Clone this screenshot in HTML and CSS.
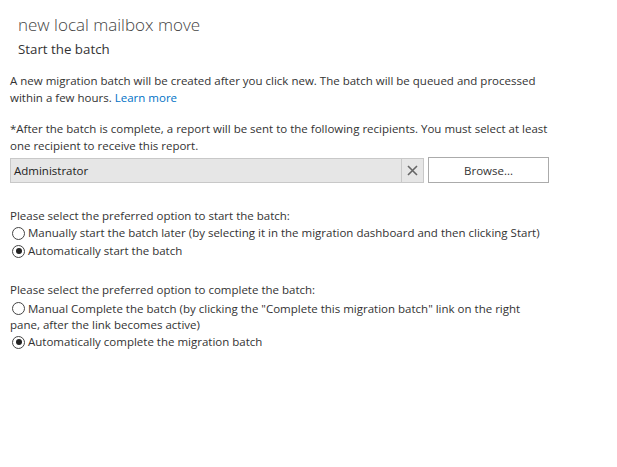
FILE: index.html
```html
<!DOCTYPE html>
<html>
<head>
<meta charset="utf-8">
<link rel="stylesheet" href="styles.css">
</head>
<body>
<div class="page">
  <div class="header">
    <h1 class="title">new local mailbox move</h1>
    <h2 class="subtitle">Start the batch</h2>
  </div>
  <p class="para intro">A new migration batch will be created after you click new. The batch will be queued and processed within a few hours. <a class="link" href="#">Learn more</a></p>
  <p class="para recip">*After the batch is complete, a report will be sent to the following recipients. You must select at least one recipient to receive this report.</p>
  <div class="picker">
    <div class="field">
      <span class="field-text">Administrator</span>
      <span class="clear"><svg width="11" height="11" viewBox="0 0 11 11"><path d="M1 1L10 10M10 1L1 10" stroke="#666" stroke-width="1.6"/></svg></span>
    </div>
    <button class="browse">Browse...</button>
  </div>
  <div class="group g1">
    <div class="label">Please select the preferred option to start the batch:</div>
    <div class="opt"><span class="radio"></span><span>Manually start the batch later (by selecting it in the migration dashboard and then clicking Start)</span></div>
    <div class="opt"><span class="radio on"></span><span>Automatically start the batch</span></div>
  </div>
  <div class="group g2">
    <div class="label">Please select the preferred option to complete the batch:</div>
    <div class="opt wrap"><span class="radio"></span>Manual Complete the batch (by clicking the "Complete this migration batch" link on the right pane, after the link becomes active)</div>
    <div class="opt"><span class="radio on"></span><span>Automatically complete the migration batch</span></div>
  </div>
</div>
</body>
</html>
```
FILE: styles.css
```css
html, body {
  margin: 0;
  padding: 0;
  background: #fff;
}
body {
  font-family: "Open Sans", "Noto Sans", sans-serif;
  color: #333;
  font-size: 11.5px;
}
.page {
  width: 560px;
  padding: 0 0 0 10px;
}
.header {
  padding-left: 8px;
}
.title {
  margin: 0;
  padding-top: 12px;
  font-size: 17px;
  font-weight: 300;
  color: #444;
  line-height: 26px;
  height: 26px;
}
.subtitle {
  margin: 0;
  font-size: 13.3px;
  font-weight: 400;
  color: #333;
  line-height: 22px;
  height: 22px;
}
.para {
  margin: 0;
  line-height: 17px;
  width: 540px;
}
.intro {
  margin-top: 12px;
}
.recip {
  margin-top: 14px;
}
.link {
  color: #0072c6;
  text-decoration: none;
}
.picker {
  display: flex;
  align-items: center;
  gap: 4px;
  margin-top: 3px;
}
.field {
  width: 412px;
  height: 23px;
  background: #e6e6e6;
  border: 1px solid #c8c8c8;
  display: flex;
  align-items: center;
  box-sizing: content-box;
}
.field-text {
  flex: 1;
  padding-left: 3px;
  color: #222;
}
.clear {
  width: 21px;
  height: 23px;
  border-left: 1px solid #c8c8c8;
  display: flex;
  align-items: center;
  justify-content: center;
}
.browse {
  width: 121px;
  height: 26px;
  background: #fff;
  border: 1px solid #ababab;
  font: inherit;
  color: #333;
  padding: 0;
}
.group {
  margin-top: 24px;
}
.g2 {
  margin-top: 21px;
}
.label {
  line-height: 17px;
}
.opt {
  line-height: 18px;
  margin-top: 0;
  display: flex;
  align-items: center;
}
.opt.wrap {
  display: block;
  width: 530px;
  line-height: 16px;
  margin-top: 3px;
}
.radio {
  display: inline-block;
  width: 11px;
  height: 11px;
  border: 1px solid #444;
  border-radius: 50%;
  margin-right: 3px;
  margin-left: 2px;
  position: relative;
  flex: none;
  vertical-align: -2px;
  box-sizing: content-box;
}
.radio.on::after {
  content: "";
  position: absolute;
  left: 2.5px;
  top: 2.5px;
  width: 6px;
  height: 6px;
  border-radius: 50%;
  background: #222;
}
```
